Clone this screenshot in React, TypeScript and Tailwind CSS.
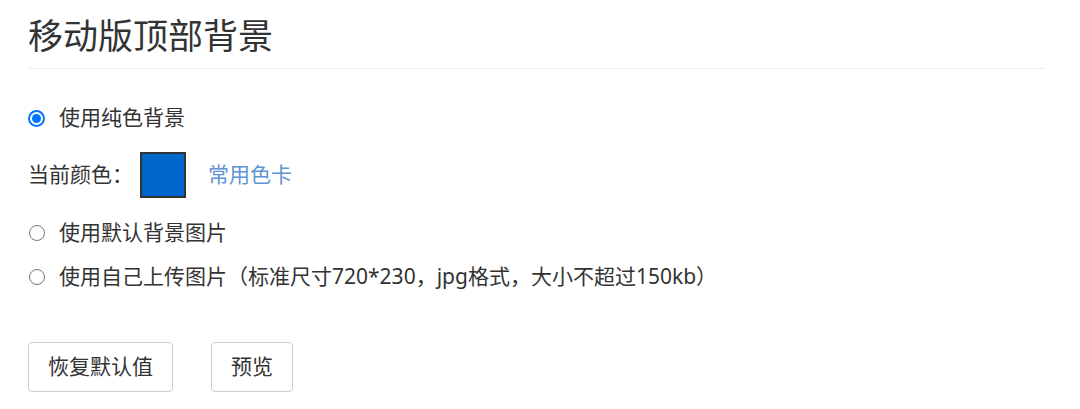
import { useState } from "react";

const font = "font-['Noto_Sans','Noto_Sans_CJK_SC',sans-serif]";

type Mode = "color" | "default" | "upload";

function Radio({ checked, onChange }: { checked: boolean; onChange: () => void }) {
  return (
    <span className="w-[17px] h-[17px] shrink-0 flex items-center justify-center">
      <input type="radio" name="bg" className="sr-only" checked={checked} onChange={onChange} />
      {checked ? (
        <span className="w-[17px] h-[17px] rounded-full border-2 border-[#0075ff] flex items-center justify-center">
          <span className="w-[9px] h-[9px] rounded-full bg-[#0075ff]" />
        </span>
      ) : (
        <span className="w-[16px] h-[16px] rounded-full border-[1.5px] border-[#767676]" />
      )}
    </span>
  );
}

export default function App() {
  const [mode, setMode] = useState<Mode>("color");
  const [color] = useState("#0066cc");

  return (
    <div className={`${font} bg-white w-[1080px] h-[409px] pl-[28px] pr-[35px] text-[#333]`}>
      <div className="pt-[18px] pb-[15px] border-b border-[#eee]">
        <h1 className="text-[35px] leading-[35px] font-normal">移动版顶部背景</h1>
      </div>

      <label className="mt-[34px] h-[30px] flex items-center text-[21px]">
        <Radio checked={mode === "color"} onChange={() => setMode("color")} />
        <span className="ml-[14px]">使用纯色背景</span>
      </label>

      <div className="mt-[19px] h-[46px] flex items-center text-[21px]">
        <span>当前颜色：</span>
        <span
          className="ml-[7px] w-[46px] h-[46px] border-2 border-[#333] box-border"
          style={{ backgroundColor: color }}
        />
        <a href="#" className="ml-[22px] text-[#5f93d2]">
          常用色卡
        </a>
      </div>

      <label className="mt-[20px] h-[30px] flex items-center text-[21px]">
        <Radio checked={mode === "default"} onChange={() => setMode("default")} />
        <span className="ml-[14px]">使用默认背景图片</span>
      </label>

      <label className="mt-[14px] h-[30px] flex items-center text-[21px]">
        <Radio checked={mode === "upload"} onChange={() => setMode("upload")} />
        <span className="ml-[14px]">使用自己上传图片（标准尺寸720*230，jpg格式，大小不超过150kb）</span>
      </label>

      <div className="mt-[50px] flex gap-[38px]">
        <button className="h-[50px] px-[19px] border border-[#ccc] rounded-[4px] bg-white text-[21px] text-[#333]">
          恢复默认值
        </button>
        <button className="h-[50px] px-[19px] border border-[#ccc] rounded-[4px] bg-white text-[21px] text-[#333]">
          预览
        </button>
      </div>
    </div>
  );
}
